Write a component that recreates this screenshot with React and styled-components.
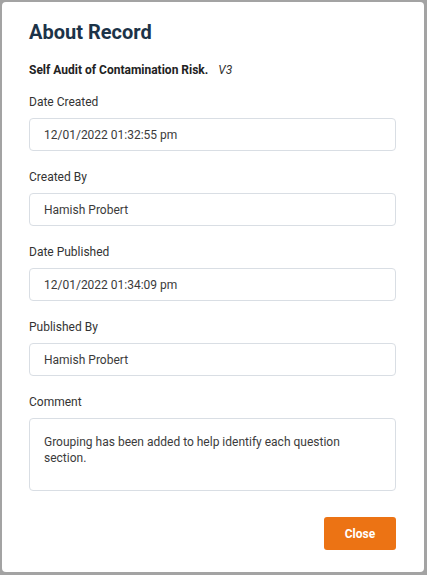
import React from "react";
import styled, { createGlobalStyle } from "styled-components";

const Global = createGlobalStyle`
  html, body { margin: 0; padding: 0; }
  body {
    background: #a3a3a3;
    font-family: Roboto, "Liberation Sans", Arial, sans-serif;
    width: 427px;
    height: 575px;
    overflow: hidden;
  }
`;

const Backdrop = styled.div`
  width: 427px;
  height: 575px;
  box-sizing: border-box;
  padding: 2px 3px 3px 2px;
  display: flex;
`;

const Modal = styled.div`
  flex: 1;
  background: #ffffff;
  border-radius: 4px;
  box-sizing: border-box;
  padding: 18px 28px 0 27px;
  display: flex;
  flex-direction: column;
`;

const Title = styled.h1`
  margin: 0;
  font-size: 20px;
  line-height: 24px;
  font-weight: 700;
  color: #1c3348;
`;

const Subtitle = styled.div`
  margin-top: 18px;
  font-size: 12px;
  line-height: 16px;
  font-weight: 700;
  color: #222;
  display: flex;
  gap: 10px;
`;

const Version = styled.span`
  font-weight: 400;
  font-style: italic;
  color: #333;
`;

const Field = styled.div`
  margin-top: ${(p) => (p.$first ? 16 : 18)}px;
  display: flex;
  flex-direction: column;
  gap: 8px;
`;

const Label = styled.label`
  font-size: 12px;
  line-height: 16px;
  color: #333;
`;

const Box = styled.div`
  box-sizing: border-box;
  height: ${(p) => (p.$multi ? 73 : 33)}px;
  border: 1px solid #d9dee4;
  border-radius: 4px;
  padding: ${(p) => (p.$multi ? "15px 14px" : "0 14px")};
  display: flex;
  align-items: ${(p) => (p.$multi ? "flex-start" : "center")};
  font-size: 12px;
  line-height: 16px;
  color: #3b3b3b;
`;

const Footer = styled.div`
  margin-top: 26px;
  display: flex;
  justify-content: flex-end;
`;

const CloseButton = styled.button`
  width: 72px;
  height: 33px;
  border: none;
  border-radius: 3px;
  background: #ec7314;
  color: #fff;
  font-family: inherit;
  font-size: 12px;
  font-weight: 700;
  cursor: pointer;
`;

const fields = [
  { label: "Date Created", value: "12/01/2022 01:32:55 pm" },
  { label: "Created By", value: "Hamish Probert" },
  { label: "Date Published", value: "12/01/2022 01:34:09 pm" },
  { label: "Published By", value: "Hamish Probert" },
  {
    label: "Comment",
    value: "Grouping has been added to help identify each question section.",
    multi: true,
  },
];

export default function App() {
  return (
    <>
      <Global />
      <Backdrop>
        <Modal>
          <Title>About Record</Title>
          <Subtitle>
            Self Audit of Contamination Risk. <Version>V3</Version>
          </Subtitle>
          {fields.map((f, i) => (
            <Field key={f.label} $first={i === 0}>
              <Label>{f.label}</Label>
              <Box $multi={f.multi}>{f.value}</Box>
            </Field>
          ))}
          <Footer>
            <CloseButton>Close</CloseButton>
          </Footer>
        </Modal>
      </Backdrop>
    </>
  );
}
